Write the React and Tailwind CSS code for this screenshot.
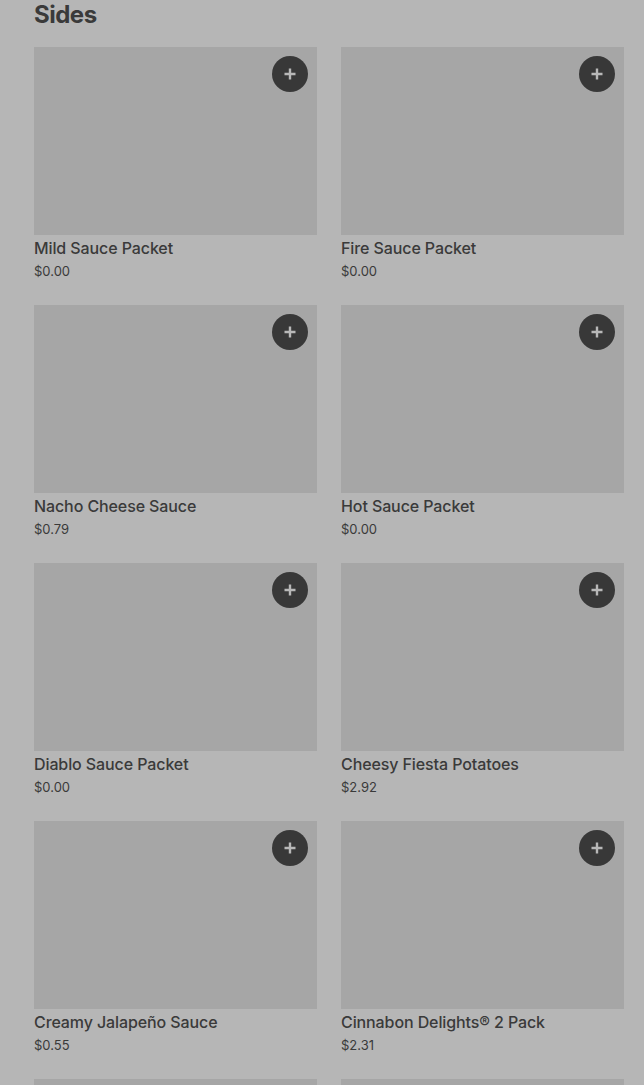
import React from 'react';

const items = [
    { name: 'Mild Sauce Packet', price: '$0.00' },
    { name: 'Fire Sauce Packet', price: '$0.00' },
    { name: 'Nacho Cheese Sauce', price: '$0.79' },
    { name: 'Hot Sauce Packet', price: '$0.00' },
    { name: 'Diablo Sauce Packet', price: '$0.00' },
    { name: 'Cheesy Fiesta Potatoes', price: '$2.92' },
    { name: 'Creamy Jalapeño Sauce', price: '$0.55' },
    { name: 'Cinnabon Delights® 2 Pack', price: '$2.31' },
    { name: 'Chips and Guacamole', price: '$3.49' },
    { name: 'Black Beans', price: '$1.99' },
];

const PlusIcon = () => (
    <svg width="14" height="14" viewBox="0 0 14 14" fill="none">
        <path d="M7 1.5v11M1.5 7h11" stroke="#b8b8b8" strokeWidth="2.4" />
    </svg>
);

const ItemCard = ({ item }) => (
    <div className="flex flex-col">
        <div className="relative h-[188px] bg-[#a6a6a6]">
            <button className="absolute top-[9px] right-[9px] w-9 h-9 rounded-full bg-[#383838] flex items-center justify-center">
                <PlusIcon />
            </button>
        </div>
        <div className="pt-px text-[16px] leading-[24px] font-medium text-[#3a3a3a] tracking-[-0.1px] truncate">{item.name}</div>
        <div className="text-[13px] leading-[22px] text-[#3a3a3a]">{item.price}</div>
    </div>
);

const App = () => {
    return (
        <div className="min-h-screen bg-[#b6b6b6] pl-[34px] pr-[20px] overflow-hidden h-[1085px]" style={{ fontFamily: 'Inter, "Liberation Sans", sans-serif' }}>
            <h2 className="text-[24px] leading-[30px] font-bold text-[#3a3a3a] tracking-[-0.5px] mb-[17px]">Sides</h2>
            <div className="grid grid-cols-2 gap-x-[24px] gap-y-[23px]">
                {items.map(item => (
                    <ItemCard key={item.name} item={item} />
                ))}
            </div>
        </div>
    );
};

export default App;
